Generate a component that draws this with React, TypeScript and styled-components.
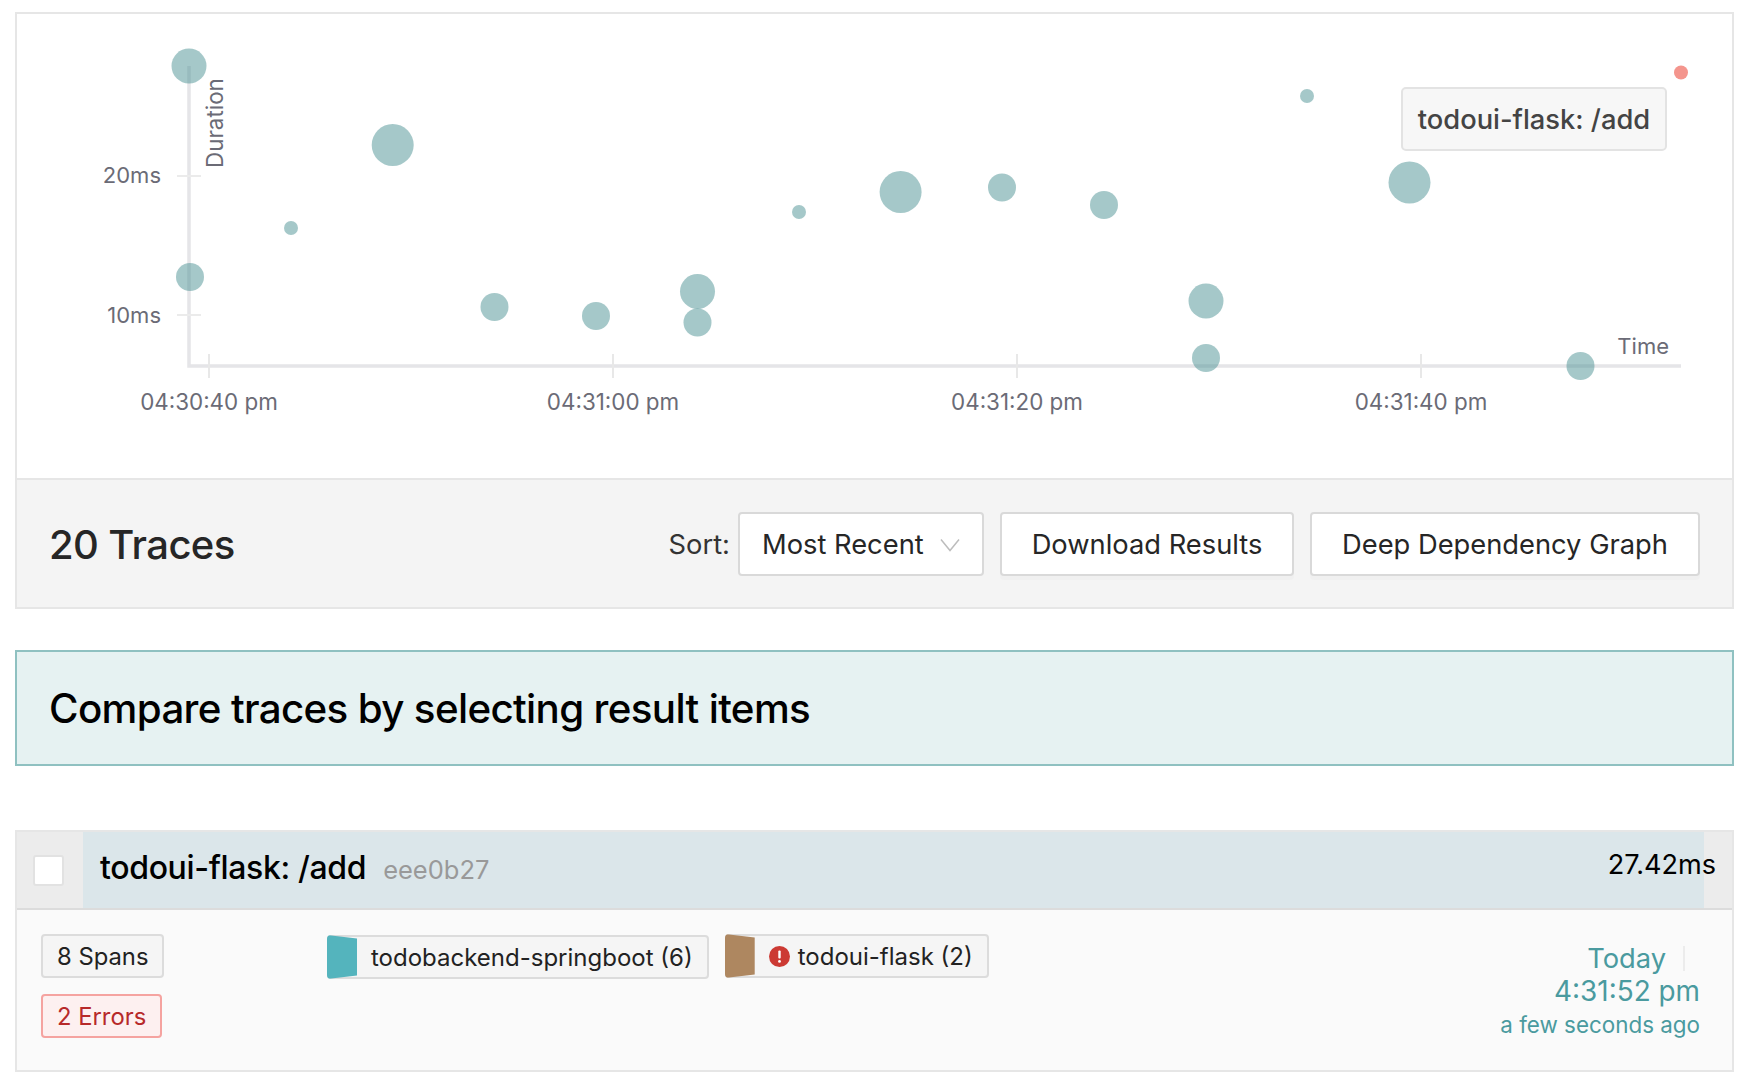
import React from "react";
import styled, { createGlobalStyle } from "styled-components";

const Global = createGlobalStyle`
  html, body { margin: 0; padding: 0; background: #fff; }
  body { font-family: Inter, "Liberation Sans", sans-serif; color: #222; -webkit-font-smoothing: antialiased; }
  * { box-sizing: border-box; }
`;

const Page = styled.div`
  width: 1750px;
  padding: 12px 16px 0 15px;
`;
const Card = styled.section`
  border: 2px solid #e6e6e6;
  border-bottom: none;
`;
const ChartArea = styled.div`
  position: relative;
  height: 464px;
  background: #fff;
`;
const ChartSvg = styled.svg`
  display: block;
  width: 100%;
  height: 100%;
  font-family: Inter, sans-serif;
`;
const Tooltip = styled.div`
  position: absolute;
  left: 1384px;
  top: 73px;
  height: 64px;
  width: 266px;
  display: flex;
  align-items: center;
  justify-content: center;
  border: 2px solid #e3e3e3;
  border-radius: 5px;
  background: #f7f7f7;
  color: #444;
  font-size: 27.3px;
  font-weight: 500;
  white-space: nowrap;
`;
const ResultsBar = styled.div`
  height: 131px;
  display: flex;
  align-items: center;
  justify-content: space-between;
  padding: 0 32px 0 32px;
  background: #f4f4f4;
  border-top: 2px solid #e6e6e6;
  border-bottom: 2px solid #e6e6e6;
`;
const Count = styled.h2`
  margin: 2px 0 0;
  font-size: 40px;
  font-weight: 500;
  letter-spacing: -0.6px;
  color: #262626;
`;
const Controls = styled.div`
  display: flex;
  align-items: center;
`;
const SortLabel = styled.span`
  font-size: 27.3px;
  margin-right: 8px;
  padding-top: 2px;
  color: #333;
`;
const Select = styled.div`
  width: 246px;
  height: 64px;
  display: flex;
  align-items: center;
  justify-content: space-between;
  padding: 2px 22px 0 22px;
  background: #fff;
  border: 2px solid #d9d9d9;
  border-radius: 4px;
  font-size: 27.3px;
  color: #262626;
  margin-right: 16px;
`;
const Button = styled.button<{ $w: number; $gap?: number }>`
  width: ${(p) => p.$w}px;
  height: 64px;
  margin-right: ${(p) => p.$gap ?? 0}px;
  background: #fff;
  border: 2px solid #d9d9d9;
  border-radius: 4px;
  box-shadow: 0 4px 0 rgba(0, 0, 0, 0.015);
  font-family: inherit;
  font-size: 27.3px;
  color: #262626;
  padding: 2px 0 0;
`;
const Banner = styled.div`
  margin-top: 41px;
  height: 116px;
  display: flex;
  align-items: center;
  padding-left: 32px;
  background: #e6f2f2;
  border: 2px solid #8fc1c1;
`;
const BannerTitle = styled.h3`
  margin: 0;
  font-size: 40.3px;
  font-weight: 500;
  letter-spacing: -0.65px;
  color: #000;
`;
const Item = styled.article`
  margin-top: 64px;
  height: 242px;
  border: 2px solid #e6e6e6;
  background: #fafafa;
`;
const ItemHeader = styled.div`
  height: 76px;
  display: flex;
  background: #ececec;
  border-bottom: 2px solid #dcdcdc;
  position: relative;
  box-sizing: content-box;
`;
const CheckCell = styled.div`
  width: 66px;
  padding: 23px 0 0 16px;
  flex: none;
`;
const Checkbox = styled.div`
  width: 31px;
  height: 31px;
  background: #fff;
  border: 2px solid #e2e2e2;
  border-radius: 3px;
`;
const DurationBar = styled.div`
  width: 1621px;
  flex: none;
  display: flex;
  align-items: baseline;
  padding: 16px 0 0 17px;
  background: #dbe6ea;
`;
const TraceName = styled.span`
  font-size: 32px;
  font-weight: 500;
  letter-spacing: -0.35px;
  color: #000;
`;
const TraceId = styled.span`
  margin-left: 17px;
  font-size: 25.5px;
  color: #999;
`;
const Duration = styled.span`
  position: absolute;
  right: 16px;
  top: 16px;
  font-size: 27.1px;
  color: #000;
`;
const ItemBody = styled.div`
  display: flex;
  padding: 24px 32px 0 24px;
`;
const Badges = styled.div`
  width: 286px;
  flex: none;
  display: flex;
  flex-direction: column;
  align-items: flex-start;
  gap: 16px;
`;
const Badge = styled.span<{ $error?: boolean }>`
  height: 44px;
  display: inline-flex;
  align-items: center;
  padding: 0 14px;
  border: 2px solid ${(p) => (p.$error ? "#f5a3a0" : "#dcdcdc")};
  border-radius: 4px;
  background: ${(p) => (p.$error ? "#fdf0f0" : "#f5f5f5")};
  color: ${(p) => (p.$error ? "#b72a2a" : "#222")};
  font-size: 23.8px;
`;
const Services = styled.div`
  flex: 1;
  display: flex;
  align-items: flex-start;
  gap: 16px;
`;
const ServiceTag = styled.span<{ $offset?: number }>`
  position: relative;
  height: 44px;
  margin-top: ${(p) => p.$offset ?? 0}px;
  display: inline-flex;
  align-items: center;
  gap: 8px;
  padding: 0 14px 0 42px;
  border: 2px solid #dcdcdc;
  border-radius: 4px;
  background: #f5f5f5;
  font-size: 24px;
  color: #222;
`;
const ServiceSwatch = styled.i<{ $color: string }>`
  position: absolute;
  left: -2px;
  top: -2px;
  bottom: -2px;
  width: 30px;
  border-radius: 4px 0 0 4px;
  background: ${(p) => p.$color};
  clip-path: polygon(0 0, 100% 8%, 100% 92%, 0 100%);
`;
const When = styled.div`
  flex: none;
  text-align: right;
  color: #4a9a9f;
  margin-top: 8px;
`;
const DateRow = styled.div`
  display: flex;
  justify-content: flex-end;
  align-items: center;
  font-size: 27.3px;
  line-height: 33px;
`;
const Divider = styled.i`
  width: 2px;
  height: 25px;
  margin: 0 15px 0 17px;
  background: #ececec;
`;
const TimeRow = styled.div`
  font-size: 27.9px;
  line-height: 33px;
`;
const Ago = styled.div`
  font-size: 22.4px;
  line-height: 30px;
  margin-top: 2px;
`;

const bubbles: [number, number, number][] = [
  [189, 66, 17.5], [392.7, 145, 21], [291, 228, 7], [190, 277, 14], [494.5, 307, 14],
  [596, 316, 14], [697.5, 291.5, 17.5], [697.5, 322.5, 14], [799, 212, 7], [900.6, 192, 21],
  [1002, 187.5, 14], [1104, 205, 14], [1206, 301, 17.5], [1206, 358, 14], [1307, 96, 7],
  [1409.5, 182.5, 21], [1580.5, 366, 14],
];
const xTicks: [number, string][] = [
  [209, "04:30:40 pm"], [613, "04:31:00 pm"], [1017, "04:31:20 pm"], [1421, "04:31:40 pm"],
];
const yTicks: [number, string, number][] = [[176, "20ms", 7], [315, "10ms", 8]];

const Chart = () => (
  <ChartSvg viewBox="17 14 1715 464">
    <path d="M189 66V366H1681" fill="none" stroke="#e5e5e8" strokeWidth="3.5" />
    {yTicks.map(([y, t, dy]) => (
      <g key={t}>
        <line x1={177} x2={201} y1={y} y2={y} stroke="#ebebeb" strokeWidth="2" />
        <text x={161} y={y + dy} textAnchor="end" fontSize="22" fill="#6b6b76">{t}</text>
      </g>
    ))}
    {xTicks.map(([x, t]) => (
      <g key={t}>
        <line x1={x} x2={x} y1={354} y2={378} stroke="#e8e8e8" strokeWidth="2" />
        <text x={x} y={410} textAnchor="middle" fontSize="22.4" fill="#6b6b76">{t}</text>
      </g>
    ))}
    <text transform="translate(223 168) rotate(-90)" fontSize="22.4" fill="#6b6b76">Duration</text>
    <text x={1669} y={354} textAnchor="end" fontSize="22" fill="#6b6b76">Time</text>
    {bubbles.map(([cx, cy, r]) => (
      <circle key={`${cx}-${cy}`} cx={cx} cy={cy} r={r} fill="rgb(76,146,148)" fillOpacity="0.5" />
    ))}
    <circle cx={1681} cy={72.5} r={7} fill="rgb(233,43,28)" fillOpacity="0.5" />
  </ChartSvg>
);

const Chevron = () => (
  <svg width="20" height="14" viewBox="0 0 20 14" fill="none">
    <path d="M1 1.5 10 12.5 19 1.5" stroke="#bdbdbd" strokeWidth="1.5" />
  </svg>
);

const ErrorIcon = () => (
  <svg width="21" height="21" viewBox="0 0 21 21">
    <circle cx="10.5" cy="10.5" r="10.5" fill="#cc3a33" />
    <rect x="9.3" y="4.5" width="2.4" height="8" rx="1" fill="#fff" />
    <circle cx="10.5" cy="15.4" r="1.4" fill="#fff" />
  </svg>
);

export default function App() {
  return (
    <Page>
      <Global />
      <Card>
        <ChartArea>
          <Chart />
          <Tooltip>todoui-flask: /add</Tooltip>
        </ChartArea>
        <ResultsBar>
          <Count>20 Traces</Count>
          <Controls>
            <SortLabel>Sort:</SortLabel>
            <Select>
              Most Recent
              <Chevron />
            </Select>
            <Button $w={294} $gap={16}>Download Results</Button>
            <Button $w={390}>Deep Dependency Graph</Button>
          </Controls>
        </ResultsBar>
      </Card>
      <Banner>
        <BannerTitle>Compare traces by selecting result items</BannerTitle>
      </Banner>
      <Item>
        <ItemHeader>
          <CheckCell>
            <Checkbox />
          </CheckCell>
          <DurationBar>
            <TraceName>todoui-flask: /add</TraceName>
            <TraceId>eee0b27</TraceId>
          </DurationBar>
          <Duration>27.42ms</Duration>
        </ItemHeader>
        <ItemBody>
          <Badges>
            <Badge>8 Spans</Badge>
            <Badge $error>2 Errors</Badge>
          </Badges>
          <Services>
            <ServiceTag $offset={1}>
              <ServiceSwatch $color="#54b4bd" />
              todobackend-springboot (6)
            </ServiceTag>
            <ServiceTag>
              <ServiceSwatch $color="#ae8760" />
              <ErrorIcon />
              todoui-flask (2)
            </ServiceTag>
          </Services>
          <When>
            <DateRow>
              Today
              <Divider />
            </DateRow>
            <TimeRow>4:31:52 pm</TimeRow>
            <Ago>a few seconds ago</Ago>
          </When>
        </ItemBody>
      </Item>
    </Page>
  );
}
